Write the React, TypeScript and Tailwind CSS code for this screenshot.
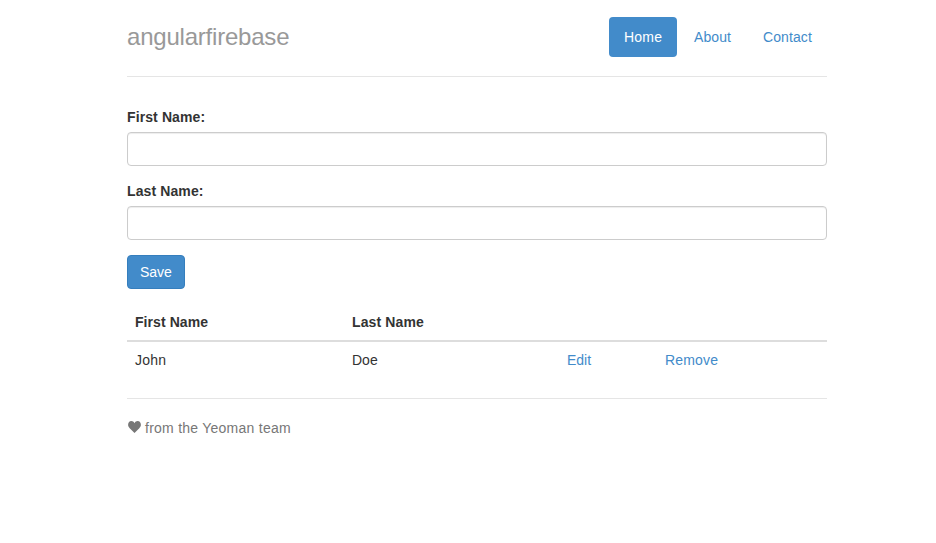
import React from "react";

const navItems = [
  { label: "Home", style: "w-[68px] rounded-[4px] bg-[#428bca] text-white tracking-[0.2px]" },
  { label: "About", style: "w-[67px] rounded-[4px] text-[#428bca] tracking-[0.08px]" },
  { label: "Contact", style: "w-[79px] rounded-[4px] text-[#428bca] tracking-[0.1px]" },
];

function Field({ label, id }: { label: string; id: string }) {
  return (
    <div className="mb-[15px]">
      <label htmlFor={id} className="mb-[5px] block font-bold tracking-[0.11px]">
        {label}
      </label>
      <input
        id={id}
        className="block h-[34px] w-full rounded-[4px] border border-[#cccccc] bg-white px-3 shadow-[inset_0_1px_1px_rgba(0,0,0,0.075)] outline-none"
      />
    </div>
  );
}

export default function App() {
  return (
    <div className="min-h-screen bg-white font-['Liberation_Sans',Arial,sans-serif] text-[14px] leading-[20px] text-[#333333]">
      <div className="ml-[127px] w-[700px] pt-[17px]">
        <header className="flex h-[60px] items-start justify-between border-b border-[#e5e5e5]">
          <h3 className="text-[24px] leading-[40px] tracking-[-0.21px] text-[#999999] [font-variant-ligatures:none]">
            angularfirebase
          </h3>
          <nav className="flex gap-[2px]">
            {navItems.map((item) => (
              <a key={item.label} href="#" className={`py-[10px] pl-[15px] ${item.style}`}>
                {item.label}
              </a>
            ))}
          </nav>
        </header>

        <form className="pt-[30px]">
          <Field label="First Name:" id="first" />
          <Field label="Last Name:" id="last" />
          <button
            type="button"
            className="block h-[34px] w-[58px] rounded-[4px] border border-[#357ebd] bg-[#428bca] px-3 text-left text-white"
          >
            Save
          </button>
        </form>

        <table className="mt-[15px] w-full table-fixed border-collapse text-left">
          <colgroup>
            <col className="w-[217px]" />
            <col className="w-[215px]" />
            <col className="w-[98px]" />
            <col />
          </colgroup>
          <thead>
            <tr className="border-b-2 border-[#dddddd]">
              <th className="p-2 tracking-[0.07px]">First Name</th>
              <th className="p-2 tracking-[0.12px]">Last Name</th>
              <th />
              <th />
            </tr>
          </thead>
          <tbody>
            <tr>
              <td className="p-2 tracking-[0.2px]">John</td>
              <td className="p-2">Doe</td>
              <td className="p-2">
                <a href="#" className="text-[#428bca]">Edit</a>
              </td>
              <td className="p-2">
                <a href="#" className="tracking-[0.16px] text-[#428bca]">Remove</a>
              </td>
            </tr>
          </tbody>
        </table>

        <footer className="mt-[20px] flex border-t border-[#e5e5e5] pt-[19px] text-[#777777]">
          <svg viewBox="0 0 14 14" className="mt-[2px] mr-[3px] ml-px h-[14px] w-[14px]" fill="currentColor">
            <path d="M6.5 12.9 L1.7 8.2 C.6 7.1 .1 6 .1 4.8 C.1 2.6 1.5 1.1 3.3 1.1 C4.7 1.1 5.9 2 6.5 3.2 C7.1 2 8.3 1.1 9.7 1.1 C11.5 1.1 12.9 2.6 12.9 4.8 C12.9 6 12.4 7.1 11.3 8.2 Z" />
          </svg>
          <p className="tracking-[0.25px]">from the Yeoman team</p>
        </footer>
      </div>
    </div>
  );
}
